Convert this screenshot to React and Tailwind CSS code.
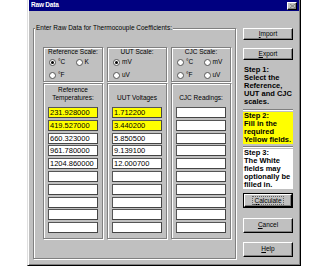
import React from 'react'

const REF = ['231.928000', '419.527000', '660.323000', '961.780000', '1204.860000', '', '', '', '', '']
const UUT = ['1.712200', '3.440200', '5.850500', '9.139100', '12.000700', '', '', '', '', '']
const CJC = ['', '', '', '', '', '', '', '', '', '']

const etched = 'border border-[#808080] shadow-[inset_1px_1px_0_#fff,1px_1px_0_#fff]'
const raised = 'border border-t-white border-l-white border-r-black border-b-black shadow-[inset_-1px_-1px_0_#808080]'

function Radio({ label, on }) {
  return (
    <div className="flex items-center w-[29px] h-[8px]">
      <span className="w-[7px] h-[7px] rounded-full bg-white border border-[#555] flex items-center justify-center shrink-0">
        {on && <span className="w-[3px] h-[3px] rounded-full bg-black" />}
      </span>
      <span className="ml-[2px] leading-[8px]">{label}</span>
    </div>
  )
}

function ScaleBox({ title, rows }) {
  return (
    <div className={`w-[60px] h-[35px] ${etched}`}>
      <div className="text-center leading-[8px] whitespace-nowrap">{title}</div>
      <div className="flex mt-[2px] pl-[5px]">{rows[0]}</div>
      <div className="flex mt-[5px] pl-[5px]">{rows[1]}</div>
    </div>
  )
}

function Column({ head, values, yellow }) {
  return (
    <div className={`w-[60px] h-[156px] mt-[1px] ${etched} pt-[2px] pl-[4px]`}>
      <div className="h-[16px] w-[50px] flex flex-col justify-end items-center leading-[8px] text-center whitespace-nowrap">
        {head.map((h) => <div key={h}>{h}</div>)}
      </div>
      <div className="mt-[5px] flex flex-col gap-[1.8px]">
        {values.map((v, i) => (
          <div
            key={i}
            className={`w-[50px] h-[11px] border border-t-[#555] border-l-[#555] border-r-[#444] border-b-[#444] pl-[1px] text-[7.5px] leading-[9px] ${yellow && i < 2 ? 'bg-[#ffff00]' : 'bg-white'}`}
          >
            {v}
          </div>
        ))}
      </div>
    </div>
  )
}

function Btn({ children, h = 'h-[12px]', mt }) {
  return (
    <div className={`w-[50px] ${h} ${mt} ${raised} bg-[#c0c0c0] flex items-center justify-center leading-none`}>
      {children}
    </div>
  )
}

export default function App() {
  return (
    <div className="w-[328px] h-[267px] bg-white text-black text-[6.5px]" style={{ fontFamily: '"Liberation Sans", Arial, sans-serif' }}>
      <div className="ml-[27px] w-[274px] h-[266px] bg-[#c0c0c0] border-l border-r border-b border-l-[#dfdfdf] border-r-black border-b-black shadow-[inset_1px_0_0_#fff,inset_-1px_-1px_0_#808080] px-[1px] flex flex-col">
        <div className="h-[11px] bg-[#000080] flex items-center justify-between pl-[2px] pr-[2px]">
          <span className="text-white font-bold text-[6.5px] tracking-[-0.2px] leading-none">Raw Data</span>
          <span className={`w-[10px] h-[8px] bg-[#c0c0c0] ${raised} flex items-center justify-center`}>
            <svg width="5" height="4" viewBox="0 0 5 4"><path d="M0 0L5 4M5 0L0 4" stroke="#808080" strokeWidth="1" /></svg>
          </span>
        </div>

        <div className="flex mt-[17px] ml-[4px]">
          <div className={`relative w-[203px] h-[231px] ${etched} pl-[9px] pt-[18px]`}>
            <span className="absolute left-[1px] top-[-5px] bg-[#c0c0c0] px-[1px] leading-[8px]">
              Enter Raw Data for Thermocouple Coefficients:
            </span>
            <div className="flex gap-[4px]">
              <div>
                <ScaleBox title="Reference Scale:" rows={[
                  [<Radio key="c" label="°C" on />, <Radio key="k" label="K" />],
                  [<Radio key="f" label="°F" />],
                ]} />
                <Column head={['Reference', 'Temperatures:']} values={REF} yellow />
              </div>
              <div>
                <ScaleBox title="UUT Scale:" rows={[
                  [<Radio key="m" label="mV" on />],
                  [<Radio key="u" label="uV" />],
                ]} />
                <Column head={['UUT Voltages']} values={UUT} yellow />
              </div>
              <div>
                <ScaleBox title="CJC Scale:" rows={[
                  [<Radio key="c" label="°C" />, <Radio key="m" label="mV" />],
                  [<Radio key="f" label="°F" />, <Radio key="u" label="uV" />],
                ]} />
                <Column head={['CJC Readings:']} values={CJC} />
              </div>
            </div>
          </div>

          <div className="ml-[7px] w-[50px] flex flex-col">
            <Btn mt="mt-0"><span><u>I</u>mport</span></Btn>
            <Btn mt="mt-[8px]"><span><u>E</u>xport</span></Btn>
            <div className="mt-[6px] pl-[1px] font-bold text-[7.5px] leading-[8px]">
              <div>Step 1:</div>
              <div>Select the</div>
              <div>Reference,</div>
              <div>UUT and CJC</div>
              <div>scales.</div>
            </div>
            <div className="mt-[3px] h-[2px] border-t border-t-[#808080] border-b border-b-white" />
            <div className="mt-[1px] h-[32px] bg-[#ffff00] pl-[1px] font-bold text-[7.5px] leading-[8px]">
              <div>Step 2:</div>
              <div>Fill in the</div>
              <div>required</div>
              <div>Yellow fields.</div>
            </div>
            <div className="mt-[2px] h-[2px] border-t border-t-[#808080] border-b border-b-white" />
            <div className="mt-[1px] h-[40px] bg-white pl-[1px] font-bold text-[7.5px] leading-[8px]">
              <div>Step 3:</div>
              <div>The White</div>
              <div>fields may</div>
              <div>optionally be</div>
              <div>filled in.</div>
            </div>
            <div className="mt-[4px] w-[50px] h-[15px] border border-black">
              <div className={`w-full h-full ${raised} bg-[#c0c0c0] flex items-center justify-center`}>
                <span className="outline outline-1 outline-dotted outline-[#666] px-[1px] leading-[7px]"><u>C</u>alculate</span>
              </div>
            </div>
            <Btn h="h-[15px]" mt="mt-[10px]"><span><u>C</u>ancel</span></Btn>
            <Btn h="h-[15px]" mt="mt-[9px]"><span><u>H</u>elp</span></Btn>
          </div>
        </div>
      </div>
    </div>
  )
}
